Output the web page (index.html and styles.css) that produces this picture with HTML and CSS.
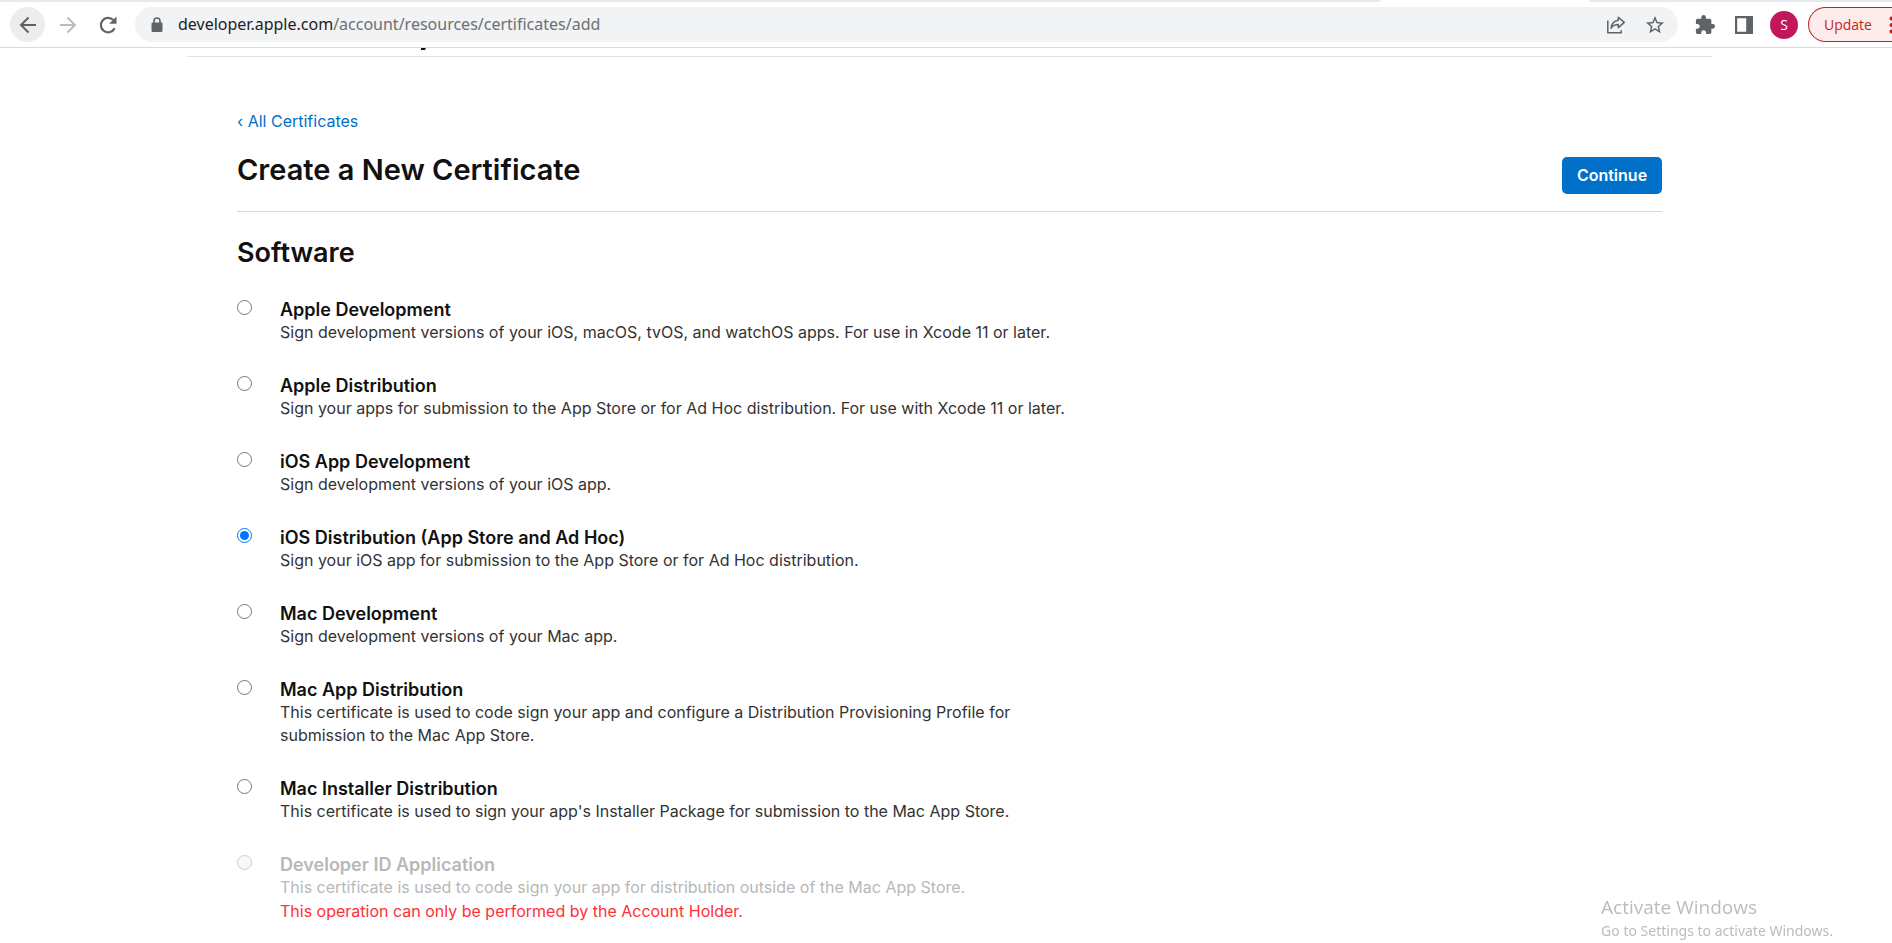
FILE: index.html
```html
<!DOCTYPE html>
<html lang="en">
<head>
<meta charset="utf-8">
<title>Create a New Certificate</title>
<link rel="stylesheet" href="styles.css">
</head>
<body>
<header class="browser">
  <div class="tabstrip"><span class="tabstrip-left"></span><span class="tabstrip-right"></span></div>
  <div class="toolbar">
    <nav class="nav-buttons" aria-label="History">
      <button class="nav-button nav-button-active" aria-label="Back"><svg width="20" height="20" viewBox="0 0 20 20" fill="none" stroke="#5f6368" stroke-width="2"><path d="M18 10H3M10.500 2.500L3 10l7.500 7.500"/></svg></button>
      <button class="nav-button" aria-label="Forward"><svg width="20" height="20" viewBox="0 0 20 20" fill="none" stroke="#babcbe" stroke-width="2"><path d="M2 10h15M9.500 2.500L17 10l-7.500 7.500"/></svg></button>
      <button class="nav-button" aria-label="Reload"><svg width="20" height="20" viewBox="0 0 20 20" fill="none" stroke="#5f6368" stroke-width="2.200"><path d="M16.600 13.200A7.200 7.200 0 1 1 15.300 5.100"/><path d="M18.500 1.500v7.300h-7.300z" fill="#5f6368" stroke="none"/></svg></button>
    </nav>
    <div class="address">
      <svg width="12" height="16" viewBox="0 0 12 16"><path d="M3 6V4a3 3 0 0 1 6 0v2" fill="none" stroke="#5f6368" stroke-width="1.600"/><rect x="0.500" y="5.500" width="11" height="9.500" rx="1.300" fill="#5f6368"/></svg>
      <span class="url"><span class="url-host">developer.apple.com</span>/account/resources/certificates/add</span>
      <button class="icon-button" aria-label="Share"><svg width="20" height="20" viewBox="0 0 20 20" fill="none" stroke="#5f6368" stroke-width="1.500"><path d="M1.800 5.500v12.200h13.400v-2.500"/><path d="M12.300 2.200l6 5.200-6 5.200V9.600c-3.300 0-5.500 1-7.200 3.500.4-4.400 3-7.200 7.200-7.800z" stroke-linejoin="round"/></svg></button>
      <button class="icon-button" aria-label="Bookmark"><svg width="20" height="20" viewBox="1 1 22 22" fill="#5f6368"><path d="M22 9.240l-7.190-.62L12 2 9.190 8.630 2 9.240l5.460 4.730L5.820 21 12 17.270 18.180 21l-1.630-7.030L22 9.240zM12 15.400l-3.760 2.270 1-4.280-3.320-2.880 4.380-.38L12 6.100l1.710 4.040 4.380.38-3.320 2.880 1 4.280L12 15.400z"/></svg></button>
    </div>
    <div class="extensions">
      <button class="icon-button" aria-label="Extensions"><svg width="20" height="20" viewBox="1 1 22 22" fill="#5f6368"><path d="M20.500 11H19V7c0-1.100-.9-2-2-2h-4V3.500a2.500 2.500 0 0 0-5 0V5H4c-1.100 0-1.990.9-1.990 2v3.800H3.500c1.490 0 2.700 1.210 2.700 2.700s-1.210 2.700-2.700 2.700H2V20c0 1.100.9 2 2 2h3.800v-1.500c0-1.490 1.210-2.700 2.700-2.700s2.700 1.210 2.700 2.700V22H17c1.100 0 2-.9 2-2v-4h1.500a2.500 2.500 0 0 0 0-5z"/></svg></button>
      <button class="icon-button" aria-label="Side panel"><svg width="20" height="20" viewBox="0 0 20 20"><path fill="#5f6368" fill-rule="evenodd" d="M1 1h18v18H1zM3.200 3.200v13.600h9V3.200z"/></svg></button>
      <button class="avatar" aria-label="Profile">S</button>
      <button class="update">Update<svg width="3" height="18" viewBox="0 0 3 18" fill="#c5221f"><circle cx="2.500" cy="2.500" r="2"/><circle cx="2.500" cy="9" r="2"/><circle cx="2.500" cy="15.500" r="2"/></svg></button>
    </div>
  </div>
</header>

<main class="page">
  <div class="page-top"><svg width="5" height="2" viewBox="0 0 5 2"><path d="M0 0h5L4 2H0z" fill="#111"/></svg></div>
  <form class="content">
    <a class="back-link" href="#">‹ All Certificates</a>
    <div class="title-row">
      <h1>Create a New Certificate</h1>
      <button class="continue" type="submit">Continue</button>
    </div>
    <h2>Software</h2>
    <div class="options">
      <div class="option"><input type="radio" name="cert" id="c1"><div class="option-text"><label for="c1">Apple Development</label><p>Sign development versions of your iOS, macOS, tvOS, and watchOS apps. For use in Xcode 11 or later.</p></div></div>
      <div class="option"><input type="radio" name="cert" id="c2"><div class="option-text"><label for="c2">Apple Distribution</label><p>Sign your apps for submission to the App Store or for Ad Hoc distribution. For use with Xcode 11 or later.</p></div></div>
      <div class="option"><input type="radio" name="cert" id="c3"><div class="option-text"><label for="c3">iOS App Development</label><p>Sign development versions of your iOS app.</p></div></div>
      <div class="option"><input type="radio" name="cert" id="c4" checked><div class="option-text"><label for="c4">iOS Distribution (App Store and Ad Hoc)</label><p>Sign your iOS app for submission to the App Store or for Ad Hoc distribution.</p></div></div>
      <div class="option"><input type="radio" name="cert" id="c5"><div class="option-text"><label for="c5">Mac Development</label><p>Sign development versions of your Mac app.</p></div></div>
      <div class="option"><input type="radio" name="cert" id="c6"><div class="option-text"><label for="c6">Mac App Distribution</label><p>This certificate is used to code sign your app and configure a Distribution Provisioning Profile for submission to the Mac App Store.</p></div></div>
      <div class="option"><input type="radio" name="cert" id="c7"><div class="option-text"><label for="c7">Mac Installer Distribution</label><p>This certificate is used to sign your app's Installer Package for submission to the Mac App Store.</p></div></div>
      <div class="option option-disabled"><input type="radio" name="cert" id="c8" disabled><div class="option-text"><label for="c8">Developer ID Application</label><p>This certificate is used to code sign your app for distribution outside of the Mac App Store.</p><p class="error">This operation can only be performed by the Account Holder.</p></div></div>
    </div>
  </form>
</main>

<aside class="watermark">
  <p class="watermark-title">Activate Windows</p>
  <p>Go to Settings to activate Windows.</p>
</aside>
</body>
</html>
```
FILE: styles.css
```css
* { box-sizing: border-box; }

body {
  margin: 0;
  background: #fff;
  color: #111;
  font-family: Inter, "Liberation Sans", sans-serif;
  font-size: 16px;
  line-height: 23px;
  overflow: hidden;
}

h1, h2, p { margin: 0; }

button {
  border: 0;
  padding: 0;
  background: none;
  font-family: inherit;
}

svg { display: block; flex: none; }

/* Browser chrome */
.browser {
  border-bottom: 1px solid #d9dadb;
  font-family: "Open Sans", "Noto Sans", sans-serif;
}

.tabstrip {
  display: flex;
  justify-content: space-between;
  height: 2px;
}

.tabstrip-left {
  width: 73%;
  background: #e5eaee;
  border-bottom-right-radius: 2px;
}

.tabstrip-right {
  width: 16%;
  background: #e5eaee;
  border-bottom-left-radius: 2px;
}

.toolbar {
  display: flex;
  align-items: center;
  height: 45px;
  padding-left: 10px;
}

.nav-buttons {
  display: flex;
  gap: 5px;
  margin-right: 10px;
}

.nav-button {
  display: grid;
  place-items: center;
  width: 35px;
  height: 35px;
  border-radius: 50%;
}

.nav-button-active { background: #ededed; }

.address {
  display: flex;
  flex: 1;
  align-items: center;
  height: 35px;
  padding: 0 13px 0 16px;
  border-radius: 18px;
  background: #f1f3f4;
}

.url {
  flex: 1;
  margin-left: 15px;
  color: #6c7074;
  font-family: "Noto Sans", "Open Sans", sans-serif;
  font-size: 16px;
}

.url-host { color: #202124; }

.address .icon-button { margin-left: 19px; }

.extensions {
  display: flex;
  align-items: center;
  gap: 19px;
  margin-left: 17px;
}

.avatar {
  width: 28px;
  height: 28px;
  margin-right: -9px;
  border-radius: 50%;
  background: #c2185b;
  color: #fff;
  font-size: 14px;
}

.extensions .avatar { margin-left: -3px; }

.update {
  display: flex;
  align-items: center;
  justify-content: space-between;
  width: 84px;
  height: 35px;
  padding-left: 15px;
  border: 1px solid #c5221f;
  border-right: 0;
  border-radius: 18px 0 0 18px;
  background: #fcedec;
  color: #c5221f;
  font-size: 14px;
}

/* Page */
.page {
  max-width: 1525px;
  margin: 0 180px 0 187px;
}

.page-top {
  height: 9px;
  padding-left: 234px;
  border-bottom: 1px solid #e3e3e3;
}

.content { padding: 52px 50px 0; }

.back-link {
  display: block;
  color: #0070c9;
  line-height: 24px;
  text-decoration: none;
}

.title-row {
  display: flex;
  align-items: flex-start;
  justify-content: space-between;
  padding: 20px 0 17px;
  border-bottom: 1px solid #d6d6d6;
}

h1 {
  font-size: 29px;
  font-weight: 600;
  line-height: 34px;
}

.continue {
  width: 100px;
  height: 37px;
  margin-top: 4px;
  padding-bottom: 2px;
  border-radius: 5px;
  background: #0070c9;
  color: #fff;
  font-size: 16px;
  font-weight: 600;
}

h2 {
  margin: 26px 0 30px;
  font-size: 27px;
  font-weight: 600;
  line-height: 30px;
}

.options {
  display: grid;
  gap: 30px;
}

.option {
  display: flex;
  align-items: flex-start;
  gap: 28px;
}

.option input {
  flex: none;
  width: 15px;
  height: 15px;
  margin: 2px 0 0;
}

.option-text { max-width: 800px; }

.option label {
  display: block;
  font-size: 18px;
  font-weight: 600;
}

.option p { color: #333; }

.option-disabled label,
.option-disabled p { color: #b8b8b8; }

.option-disabled .error {
  margin-top: 1px;
  color: #ff3037;
}

/* Operating system notice over the page */
.watermark {
  position: fixed;
  right: 59px;
  bottom: 1px;
  color: #bcbcbc;
  font-family: "Noto Sans", "Open Sans", sans-serif;
  font-size: 14px;
}

.watermark-title {
  font-family: "Open Sans", "Noto Sans", sans-serif;
  font-size: 19px;
}
```
